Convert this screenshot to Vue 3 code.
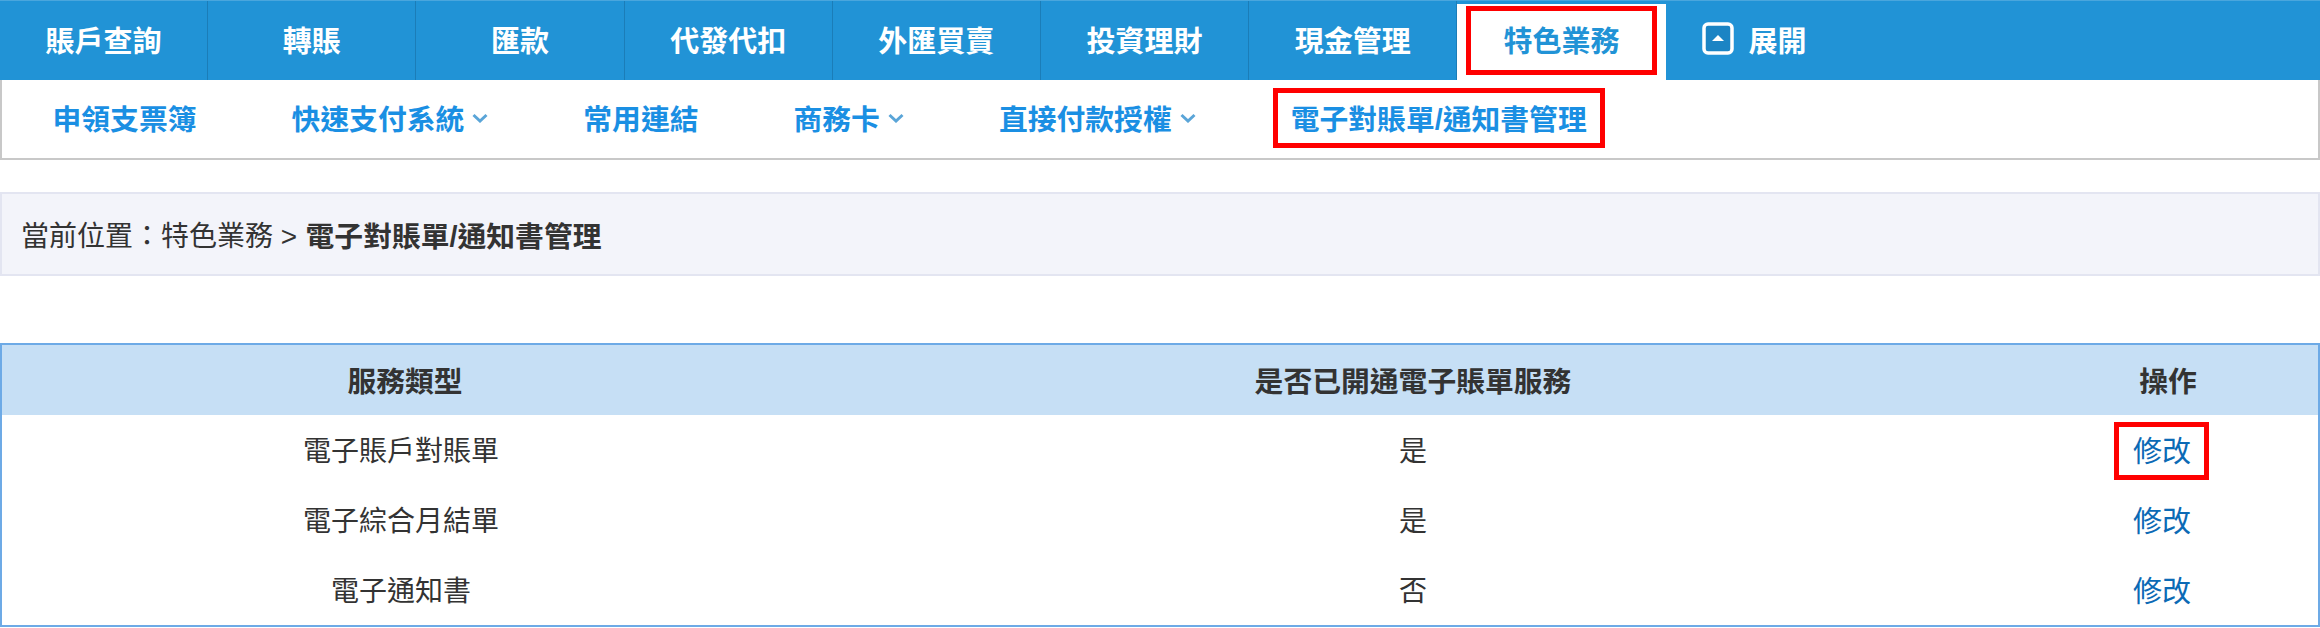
<template>
  <div class="page">
    <nav class="main-nav">
      <a
        v-for="tab in tabs"
        :key="tab"
        :class="['main-tab', { 'main-tab--active': tab === activeTab }]"
      >
        {{ tab }}
      </a>
      <a class="main-toggle">
        <svg class="toggle-icon" viewBox="0 0 32 33" width="32" height="33">
          <rect x="2" y="2" width="28" height="29" rx="4" fill="#1b84c4" stroke="#fff" stroke-width="3.5" />
          <path d="M10 19 L16 13 L22 19 Z" fill="#fff" />
        </svg>
        展開
      </a>
    </nav>

    <div class="sub-nav">
      <a
        v-for="item in subItems"
        :key="item.label"
        :class="['sub-item', { 'sub-item--active': item.active }]"
      >
        {{ item.label }}
        <svg v-if="item.menu" class="chevron" viewBox="0 0 16 10" width="16" height="10">
          <path d="M1.5 2 L8 8 L14.5 2" fill="none" stroke="#5aa5d8" stroke-width="3" />
        </svg>
      </a>
    </div>

    <div class="breadcrumb">
      當前位置：特色業務 &gt; <strong>電子對賬單/通知書管理</strong>
    </div>

    <table class="service-table">
      <thead>
        <tr>
          <th class="col-type">服務類型</th>
          <th>是否已開通電子賬單服務</th>
          <th class="col-action">操作</th>
        </tr>
      </thead>
      <tbody>
        <tr v-for="(row, i) in rows" :key="row.name">
          <td class="cell-type">{{ row.name }}</td>
          <td>{{ row.opened }}</td>
          <td class="cell-action">
            <a :class="['edit-link', { 'edit-link--active': i === 0 }]">修改</a>
          </td>
        </tr>
      </tbody>
    </table>
  </div>
</template>

<script setup>
const tabs = ['賬戶查詢', '轉賬', '匯款', '代發代扣', '外匯買賣', '投資理財', '現金管理', '特色業務'];
const activeTab = '特色業務';

const subItems = [
  { label: '申領支票簿' },
  { label: '快速支付系統', menu: true },
  { label: '常用連結' },
  { label: '商務卡', menu: true },
  { label: '直接付款授權', menu: true },
  { label: '電子對賬單/通知書管理', active: true }
];

const rows = [
  { name: '電子賬戶對賬單', opened: '是' },
  { name: '電子綜合月結單', opened: '是' },
  { name: '電子通知書', opened: '否' }
];
</script>

<style>
html, body { margin: 0; background: #fff; }
</style>

<style scoped>
.page {
  width: 2320px;
  height: 628px;
  overflow: hidden;
  font-family: "Liberation Sans", "Noto Sans CJK TC", sans-serif;
  color: #333;
  font-size: 28px;
}

.main-nav {
  display: flex;
  height: 80px;
  background: #2193d6;
  border-top: 1px solid #4aa6dd;
  box-sizing: border-box;
}
.main-tab {
  position: relative;
  width: 208.2px;
  box-sizing: border-box;
  display: flex;
  align-items: center;
  justify-content: center;
  color: #fff;
  font-weight: bold;
  font-size: 29px;
  border-right: 1px solid #1b7db8;
  padding-bottom: 4px;
}
.main-tab--active {
  background: #fff;
  color: #2193d6;
  border-right: none;
  margin-top: 3px;
  padding-bottom: 7px;
}
.main-tab--active::after {
  content: "";
  position: absolute;
  inset: 2px 9px 5px 9px;
  border: 5px solid #f00;
}
.main-toggle {
  display: flex;
  align-items: center;
  gap: 15px;
  margin-left: 36px;
  color: #fff;
  font-weight: bold;
  font-size: 29px;
  padding-bottom: 4px;
}

.sub-nav {
  display: flex;
  align-items: center;
  height: 80px;
  box-sizing: border-box;
  border: solid #c8c8c8;
  border-width: 0 2px 2px 2px;
  padding-left: 3px;
}
.sub-item {
  position: relative;
  display: flex;
  align-items: center;
  gap: 8px;
  padding: 0 47.5px;
  color: #1a8fe3;
  font-weight: bold;
  font-size: 28.8px;
  margin-bottom: 3px;
}
.sub-item--active::after {
  content: "";
  position: absolute;
  inset: -9px 29.5px -10px 29.5px;
  border: 5px solid #f00;
}

.breadcrumb {
  margin-top: 32px;
  height: 84px;
  box-sizing: border-box;
  display: flex;
  align-items: center;
  gap: 0.3em;
  padding-left: 19px;
  background: #f3f4fa;
  border: 2px solid #e3e5f1;
  color: #333;
}
.breadcrumb strong { font-weight: bold; font-size: 28.8px; }

.service-table {
  display: table;
  margin-top: 67px;
  width: 2320px;
  height: 282px;
  box-sizing: border-box;
  border-collapse: separate;
  border-spacing: 0;
  border: 2px solid #6daae6;
  table-layout: fixed;
}
.service-table th {
  box-sizing: border-box;
  height: 70px;
  background: #c6dff5;
  font-weight: bold;
  font-size: 28.8px;
  padding: 0 0 2px;
}
.service-table td {
  box-sizing: border-box;
  height: 70px;
  text-align: center;
  padding: 0 0 2px;
}
.col-type { width: 806px; }
.col-action { width: 300px; }
.cell-type { padding-right: 8px !important; }
.cell-action { padding-right: 12px !important; }
.edit-link {
  position: relative;
  color: #0b6ab5;
  font-size: 29px;
}
.edit-link--active::after {
  content: "";
  position: absolute;
  inset: -14px -18px -12px -19px;
  border: 5px solid #f00;
}
</style>
